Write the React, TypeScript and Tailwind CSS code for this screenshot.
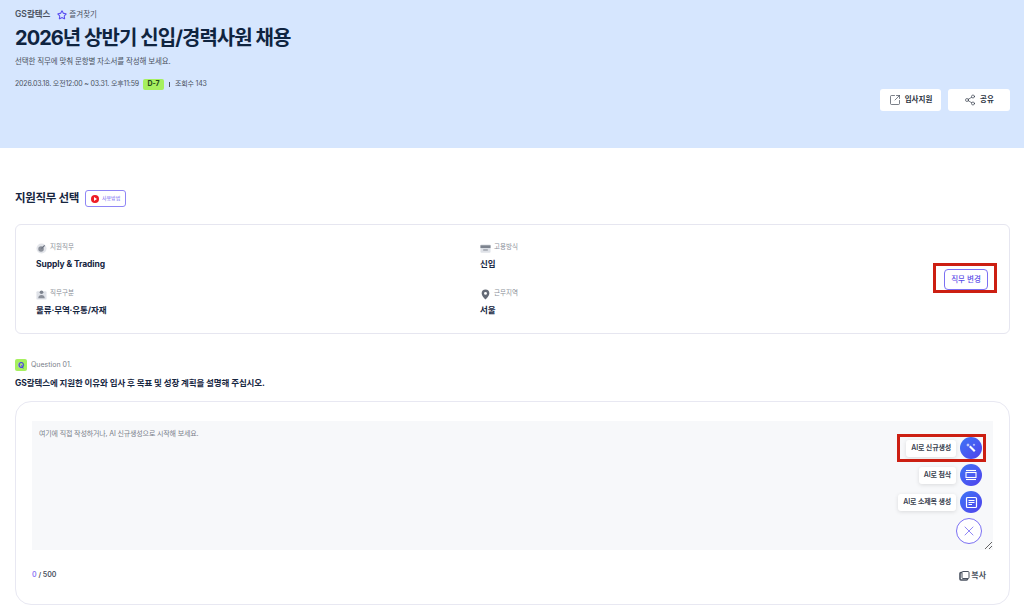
import { Share2, SquareArrowOutUpRight, Star, X } from "lucide-react";

const fontStack = "font-['Inter','Noto_Sans_CJK_KR',sans-serif]";

function TargetIcon() {
  return (
    <svg width="11" height="11" viewBox="0 0 12 12">
      <circle cx="6" cy="6" r="5.5" fill="#e3e5ea" />
      <circle cx="5.5" cy="6.5" r="3" fill="#8a8f99" />
      <path d="M6 6l3.5-3.5" stroke="#6b7280" strokeWidth="1.2" />
    </svg>
  );
}

function PersonIcon() {
  return (
    <svg width="11" height="11" viewBox="0 0 12 12">
      <rect x="0.5" y="2.5" width="11" height="9" rx="1" fill="#dfe2e8" />
      <circle cx="6" cy="3.5" r="2" fill="#7d838e" />
      <path d="M2.5 10c0-2.5 1.5-3.5 3.5-3.5s3.5 1 3.5 3.5z" fill="#8a8f99" />
    </svg>
  );
}

function BriefIcon() {
  return (
    <svg width="11" height="11" viewBox="0 0 12 12">
      <rect x="0.5" y="1.5" width="11" height="9" rx="1" fill="#dfe2e8" />
      <rect x="0.5" y="2.5" width="11" height="3" fill="#7d838e" />
      <rect x="3.5" y="7" width="5" height="1.2" fill="#8a8f99" />
    </svg>
  );
}

function PinIcon() {
  return (
    <svg width="11" height="11" viewBox="0 0 12 12">
      <path
        fillRule="evenodd"
        d="M6 0.5a4.2 4.2 0 0 0-4.2 4.2c0 3 4.2 6.8 4.2 6.8s4.2-3.8 4.2-6.8A4.2 4.2 0 0 0 6 0.5zm0 2.7a1.6 1.6 0 1 1 0 3.2 1.6 1.6 0 0 1 0-3.2z"
        fill="#656b76"
      />
    </svg>
  );
}

function CopyIcon() {
  return (
    <svg width="11" height="11" viewBox="0 0 11 11" fill="none" stroke="#4a5260">
      <rect x="3" y="1.5" width="7" height="7" rx="1" strokeWidth="1" />
      <path d="M3 2.5H2a1 1 0 0 0-1 1V9a1 1 0 0 0 1 1h5.5a1 1 0 0 0 1-1V8.5" strokeWidth="1.6" />
    </svg>
  );
}

function InfoItem({ icon, label, value }: { icon: React.ReactNode; label: string; value: string }) {
  return (
    <div className="h-[46px]">
      <div className="flex h-[14px] items-center gap-[3px] text-[6.5px] text-[#8a8f99]">
        {icon}
        <span>{label}</span>
      </div>
      <div className="mt-[2px] text-[8.5px] leading-[14px] font-bold tracking-[-0.1px] text-[#16263f]">{value}</div>
    </div>
  );
}

function AiAction({ label, children }: { label: string; children: React.ReactNode }) {
  return (
    <div className="flex items-center gap-[4px]">
      <div className="flex h-[17px] items-center rounded-[3px] bg-white px-[5px] text-[7px] font-semibold tracking-[-0.15px] text-[#3a4250] shadow-[0_1px_4px_rgba(0,0,0,0.12)]">
        {label}
      </div>
      <div className="flex h-[22px] w-[22px] items-center justify-center rounded-full bg-gradient-to-br from-[#3b74f6] to-[#4f3fec]">
        {children}
      </div>
    </div>
  );
}

export default function App() {
  return (
    <div className={`${fontStack} relative h-[610px] w-[1024px] overflow-hidden bg-white`}>
      <header className="h-[148px] bg-[#d6e6fe] px-[15px] pt-[8px]">
        <div className="flex h-[13px] items-center text-[7.5px] text-[#4a5260]">
          <span className="text-[8.5px] font-semibold">GS칼텍스</span>
          <Star className="ml-[7px] h-[10px] w-[10px] text-[#5b4ff0]" strokeWidth={2.5} />
          <span className="ml-[2px]">즐겨찾기</span>
        </div>
        <h1 className="mt-[3px] text-[20px] leading-[28px] font-bold tracking-[-0.95px] text-[#0f2440]">
          2026년 상반기 신입/경력사원 채용
        </h1>
        <p className="mt-[4px] text-[7.5px] leading-[12px] tracking-[-0.15px] text-[#4a5260]">
          선택한 직무에 맞춰 문항별 자소서를 작성해 보세요.
        </p>
        <div className="mt-[10px] flex h-[12px] items-center text-[7px] tracking-[-0.17px] text-[#4a5260]">
          <span>2026.03.18. 오전12:00 ~ 03.31. 오후11:59</span>
          <span className="ml-[4px] flex h-[11px] w-[21px] items-center justify-center rounded-[2px] bg-[#a6f05f] text-[7px] font-bold text-[#24481a]">
            D-7
          </span>
          <span className="mx-[5px] h-[5px] w-px bg-[#4a5260]" />
          <span>조회수 143</span>
        </div>
        <div className="mt-[-1px] flex justify-end gap-[7px]">
          <button className="flex h-[22px] w-[61px] items-center justify-center gap-[4px] rounded-[3px] bg-white text-[7.5px] font-semibold text-[#2c3442]">
            <SquareArrowOutUpRight className="h-[12px] w-[12px]" strokeWidth={1.25} />
            입사지원
          </button>
          <button className="mr-[-1px] flex h-[22px] w-[62px] items-center justify-center gap-[4px] rounded-[3px] bg-white text-[7.5px] font-semibold text-[#2c3442]">
            <Share2 className="h-[12px] w-[12px]" strokeWidth={1.25} />
            공유
          </button>
        </div>
      </header>

      <main className="px-[15px]">
        <div className="mt-[42px] flex h-[17px] items-center">
          <h2 className="text-[11.5px] font-bold tracking-[-0.3px] text-[#16263f]">지원직무 선택</h2>
          <button className="ml-[6px] flex h-[17px] w-[41px] items-center justify-center gap-[3px] rounded-[3px] border border-[#8f86f5] text-[5px] text-[#6a5cf0]">
            <span className="flex h-[8px] w-[8px] items-center justify-center rounded-full bg-[#ee1c25]">
              <span className="ml-[1px] border-y-[2px] border-l-[3px] border-y-transparent border-l-white" />
            </span>
            사용방법
          </button>
        </div>

        <section className="relative mt-[17px] h-[110px] w-[995px] rounded-[6px] border border-[#e6e6f0] pt-[16px] pl-[20px]">
          <div className="grid grid-cols-[444px_1fr]">
            <InfoItem icon={<TargetIcon />} label="지원직무" value="Supply & Trading" />
            <InfoItem icon={<BriefIcon />} label="고용방식" value="신입" />
            <InfoItem icon={<PersonIcon />} label="직무구분" value="물류·무역·유통/자재" />
            <InfoItem icon={<PinIcon />} label="근무지역" value="서울" />
          </div>
          <button className="absolute top-[44px] right-[21px] h-[21px] w-[44px] rounded-[4px] border border-[#7b70f3] text-[7.5px] font-medium text-[#5a4de8]">
            직무 변경
          </button>
          <div className="absolute top-[38px] right-[12px] h-[30px] w-[64px] border-[3px] border-[#cc1f12]" />
        </section>

        <div className="mt-[25px] flex h-[12px] items-center gap-[4px]">
          <span className="flex h-[12px] w-[12px] items-center justify-center rounded-[2px] bg-[#a6f05f] text-[8px] font-bold text-[#4f46e5]">
            Q
          </span>
          <span className="mt-[1px] text-[7px] text-[#7a808a]">Question 01.</span>
        </div>
        <h3 className="mt-[6px] text-[8.5px] leading-[12px] font-bold tracking-[-0.1px] text-[#16263f]">
          GS칼텍스에 지원한 이유와 입사 후 목표 및 성장 계획을 설명해 주십시오.
        </h3>

        <section className="relative mt-[12px] h-[204px] w-[995px] rounded-[16px] border border-[#e8e8f2] px-[16px] pt-[19px]">
          <textarea
            className="block h-[129px] w-[961px] resize-y bg-[#f7f8fa] px-[7px] py-[8px] text-[7px] leading-[10px] tracking-[-0.15px] outline-none placeholder:text-[#7a808a]"
            placeholder="여기에 직접 작성하거나, AI 신규생성으로 시작해 보세요."
          />
          <div className="absolute top-[35px] right-[27px] flex flex-col items-end gap-[5px]">
            <AiAction label="AI로 신규생성">
              <svg width="12" height="12" viewBox="0 0 12 12" fill="white">
                <path d="M4.5 4.5l1-1 5 5-1.5 1.5-5-5z" />
                <path d="M3 1l.5 1.5L5 3l-1.5.5L3 5l-.5-1.5L1 3l1.5-.5z" />
                <path d="M9 1.5l.4 1 1 .4-1 .4-.4 1-.4-1-1-.4 1-.4z" />
              </svg>
            </AiAction>
            <AiAction label="AI로 첨삭">
              <svg width="14" height="14" viewBox="0 0 14 14" fill="none" stroke="white" strokeWidth="1.1">
                <path d="M2 2.5h10" />
                <rect x="2" y="4.5" width="10" height="5" />
                <path d="M2 11.5h10" />
              </svg>
            </AiAction>
            <AiAction label="AI로 소제목 생성">
              <svg width="13" height="13" viewBox="0 0 13 13" fill="none" stroke="white" strokeWidth="1.2">
                <rect x="1.5" y="1.5" width="10" height="10" rx="1" />
                <path d="M3.5 4.5h6M3.5 6.5h6M3.5 8.5h3.5" />
              </svg>
            </AiAction>
            <div className="flex h-[26px] w-[26px] items-center justify-center rounded-full border border-[#7b70f3] bg-white">
              <X className="h-[16px] w-[16px] text-[#7b70f3]" strokeWidth={1.25} />
            </div>
          </div>
          <div className="absolute top-[32px] right-[23px] h-[28px] w-[89px] border-[3px] border-[#cc1f12]" />

          <div className="mt-[19px] flex items-center justify-between pr-[7px] text-[7px] font-semibold text-[#4a5260]">
            <span>
              <span className="text-[#8f7bf5]">0</span> / 500
            </span>
            <span className="flex items-center gap-[1px] text-[8px]">
              <CopyIcon />
              복사
            </span>
          </div>
        </section>
      </main>
    </div>
  );
}
